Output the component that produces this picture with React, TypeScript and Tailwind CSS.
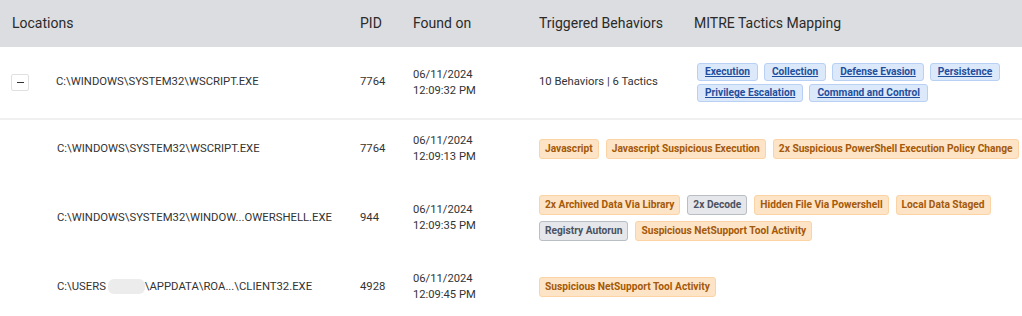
const mitre = [
  "Execution",
  "Collection",
  "Defense Evasion",
  "Persistence",
  "Privilege Escalation",
  "Command and Control",
];

type Tag = { label: string; muted?: boolean };

const children: { path: React.ReactNode; pid: string; date: string; time: string; tags: Tag[] }[] = [
  {
    path: "C:\\WINDOWS\\SYSTEM32\\WSCRIPT.EXE",
    pid: "7764",
    date: "06/11/2024",
    time: "12:09:13 PM",
    tags: [
      { label: "Javascript" },
      { label: "Javascript Suspicious Execution" },
      { label: "2x Suspicious PowerShell Execution Policy Change" },
    ],
  },
  {
    path: "C:\\WINDOWS\\SYSTEM32\\WINDOW...OWERSHELL.EXE",
    pid: "944",
    date: "06/11/2024",
    time: "12:09:35 PM",
    tags: [
      { label: "2x Archived Data Via Library" },
      { label: "2x Decode", muted: true },
      { label: "Hidden File Via Powershell" },
      { label: "Local Data Staged" },
      { label: "Registry Autorun", muted: true },
      { label: "Suspicious NetSupport Tool Activity" },
    ],
  },
  {
    path: (
      <>
        C:\USERS
        <span className="inline-block w-[37px] h-[15px] rounded-md bg-[#ececec] align-middle ml-[2px]" />
        \APPDATA\ROA...\CLIENT32.EXE
      </>
    ),
    pid: "4928",
    date: "06/11/2024",
    time: "12:09:45 PM",
    tags: [{ label: "Suspicious NetSupport Tool Activity" }],
  },
];

const grid = "grid grid-cols-[348px_53px_126px_155px_1fr] pl-3";

function BehaviorTag({ label, muted }: Tag) {
  return (
    <span
      className={
        muted
          ? "h-5 px-[5px] flex items-center whitespace-nowrap rounded-[3px] border border-[#b9bdc4] bg-[#e5e7ea] text-[#4b5262] text-[10.2px] font-bold"
          : "h-5 px-[5px] flex items-center whitespace-nowrap rounded-[3px] border border-[#fbd3a4] bg-[#fde4c6] text-[#a4590b] text-[10.2px] font-bold"
      }
    >
      {label}
    </span>
  );
}

function DateCell({ date, time }: { date: string; time: string }) {
  return (
    <div className="text-[11.2px] leading-4">
      <div>{date}</div>
      <div>{time}</div>
    </div>
  );
}

export default function App() {
  return (
    <div className="w-[1022px] h-[316px] overflow-hidden bg-white text-[#333333] font-['Roboto',sans-serif]">
      {/* Header */}
      <div className={`${grid} h-[47px] items-center bg-[#dcdde0] text-[14px] text-[#2a2a2a]`}>
        <div>Locations</div>
        <div>PID</div>
        <div>Found on</div>
        <div>Triggered Behaviors</div>
        <div>MITRE Tactics Mapping</div>
      </div>

      {/* Parent row */}
      <div className={`${grid} py-4 items-center border-b-2 border-[#f0f0f0]`}>
        <div className="flex items-center text-[11.3px]">
          <div className="w-[45px] -ml-px">
            <button className="w-[18px] h-[17px] border border-[#e0e0e0] rounded-[2px] bg-white flex items-center justify-center">
              <span className="block w-[7px] h-px bg-[#333]" />
            </button>
          </div>
          C:\WINDOWS\SYSTEM32\WSCRIPT.EXE
        </div>
        <div className="text-[11.3px]">7764</div>
        <DateCell date="06/11/2024" time="12:09:32 PM" />
        <div className="text-[11.3px]">10 Behaviors | 6 Tactics</div>
        <div className="flex flex-wrap gap-x-[6px] gap-y-[3px] pl-[3px] pr-2">
          {mitre.map((m) => (
            <span
              key={m}
              className="h-[18px] px-[7px] flex items-center whitespace-nowrap rounded-[3px] border border-[#b8d0f4] bg-[#dce9fb] text-[#1f4f9c] text-[10.2px] font-bold underline"
            >
              {m}
            </span>
          ))}
        </div>
      </div>

      {/* Child rows */}
      {children.map((c, i) => (
        <div key={i} className={`${grid} py-[15px] items-center ${i === 0 ? "-mt-[2px]" : ""}`}>
          <div className="pl-[45px] text-[11.3px] whitespace-nowrap">{c.path}</div>
          <div className="text-[11.3px]">{c.pid}</div>
          <DateCell date={c.date} time={c.time} />
          <div className="col-span-2 flex flex-wrap gap-x-[7px] gap-y-[6px]">
            {c.tags.map((t) => (
              <BehaviorTag key={t.label} {...t} />
            ))}
          </div>
        </div>
      ))}
    </div>
  );
}
